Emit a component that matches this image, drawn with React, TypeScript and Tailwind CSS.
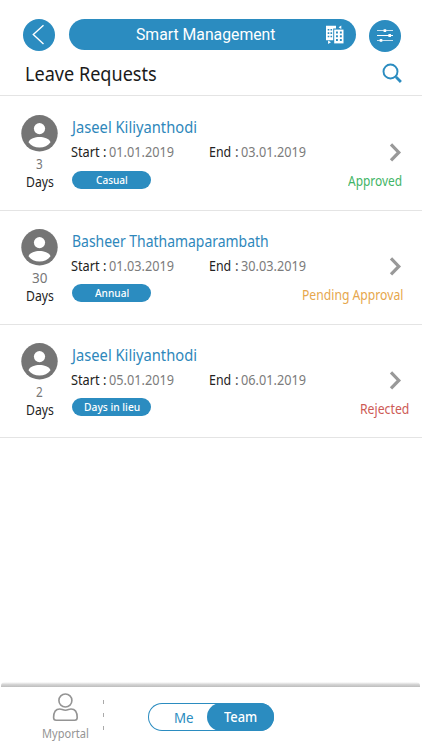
import { useLayoutEffect, useRef, useState } from 'react';
import clsx from 'clsx';

/* One line of text condensed or widened to an exact width. */
function Fit({ w, className, children }: { w: number; className?: string; children: string }) {
  const ref = useRef<HTMLSpanElement>(null);
  const [scale, setScale] = useState(1);
  useLayoutEffect(() => {
    if (ref.current) setScale(w / ref.current.offsetWidth);
  }, [w, children]);
  return (
    <span className={clsx('block shrink-0 whitespace-nowrap', className)} style={{ width: w }}>
      <span ref={ref} className="inline-block origin-left align-top" style={{ transform: `scaleX(${scale})` }}>
        {children}
      </span>
    </span>
  );
}

function Avatar() {
  return (
    <svg className="block h-[37px] w-[37px]" viewBox="0 0 37 37">
      <circle cx="18.500" cy="18.300" r="18.200" fill="#757575" />
      <circle cx="18.500" cy="13.600" r="5.600" fill="#fff" />
      <path d="M7.500 27.200C8.600 23.600 14.200 22 18.500 22s9.900 1.600 11 5.200c-2.400 3.300-6.400 5.300-11 5.300s-8.600-2-11-5.300z" fill="#fff" />
    </svg>
  );
}

function Buildings() {
  return (
    <svg className="block h-[20px] w-[20px]" viewBox="0 0 20 20">
      <path d="M1 .8h10v2.700H8.200v11.700H1z" fill="#fff" />
      <path d="M2.700 4h1.600v1.600H2.700zM5.500 4h1.600v1.600H5.500zM2.700 7.300h1.600v1.600H2.700zM5.500 7.300h1.600v1.600H5.500zM2.700 10.700h1.600v1.600H2.700zM5.500 10.700h1.600v1.600H5.500z" fill="#2b8cc0" />
      <path d="M9.200 4.600h9.300v13.800H9.200z" fill="#fff" />
      <path d="M11 6.600h1.900v1.900H11zM14.900 6.600h1.900v1.900h-1.900zM11 10.300h1.900v1.900H11zM14.900 10.300h1.900v1.900h-1.900zM11 14h1.900v1.900H11zM14.900 14h1.900v1.900h-1.900z" fill="#2b8cc0" />
      <path d="M13.600 2.200L16.300.500v3.400zM6 17.300l-2.900-1.700v3.400z" fill="#fff" />
    </svg>
  );
}

type Request = {
  name: string;
  nameW: number;
  nameClass: string;
  days: string;
  daysW: number;
  start: string;
  end: string;
  kind: string;
  kindW: number;
  status: string;
  statusW: number;
  statusClass: string;
  rowClass: string;
  badgeClass: string;
};

const requests: Request[] = [
  { name: 'Jaseel Kiliyanthodi', nameW: 125, nameClass: 'ml-[0.500px]', days: '3', daysW: 7, start: '01.01.2019', end: '03.01.2019', kind: 'Casual', kindW: 32, status: 'Approved', statusW: 54, statusClass: 'text-[#3fb567] mr-[20px]', rowClass: 'h-[115px] pt-[19px]', badgeClass: 'mt-[11px]' },
  { name: 'Basheer Thathamaparambath', nameW: 197, nameClass: 'ml-[1px]', days: '30', daysW: 15, start: '01.03.2019', end: '30.03.2019', kind: 'Annual', kindW: 34, status: 'Pending Approval', statusW: 101, statusClass: 'text-[#e6a74d] mr-[19px]', rowClass: 'h-[114px] pt-[18px]', badgeClass: 'mt-[10px]' },
  { name: 'Jaseel Kiliyanthodi', nameW: 125, nameClass: 'ml-[0.500px]', days: '2', daysW: 7, start: '05.01.2019', end: '06.01.2019', kind: 'Days in lieu', kindW: 56, status: 'Rejected', statusW: 49, statusClass: 'text-[#cd5a55] mr-[13px]', rowClass: 'h-[113px] pt-[18px]', badgeClass: 'mt-[10px]' },
];

function Row({ r }: { r: Request }) {
  return (
    <li className={clsx('flex border-b border-[#e4e4e4]', r.rowClass)}>
      <div className="ml-[21px] flex w-[37px] shrink-0 flex-col items-center">
        <Avatar />
        <Fit w={r.daysW} className="mt-[4px] text-[13.500px] leading-[16px] text-[#777]">{r.days}</Fit>
        <Fit w={28} className="mt-[2px] text-[13.500px] leading-[16px] text-[#222]">Days</Fit>
      </div>
      <div className="ml-[13px] flex w-[236px] shrink-0 flex-col pt-[2px]">
        <Fit w={r.nameW} className={clsx('text-[16px] leading-[20px] text-[#2e87bb]', r.nameClass)}>{r.name}</Fit>
        <div className="mt-[7px] flex text-[13.500px] leading-[16px]">
          <Fit w={35} className="text-[#222]">Start :</Fit>
          <Fit w={65} className="ml-[2.500px] text-[#7c7c7c]">{r.start}</Fit>
          <Fit w={22} className="ml-[35.500px] text-[#222]">End</Fit>
          <Fit w={4} className="ml-[4px] text-[#555]">:</Fit>
          <Fit w={65} className="ml-[2px] text-[#7c7c7c]">{r.end}</Fit>
        </div>
        <div className={clsx('ml-[1px] flex h-[18px] w-[79px] items-center justify-center rounded-full bg-[#2b8cc0] text-[11px] font-medium leading-[18px] text-white', r.badgeClass)}>
          <Fit w={r.kindW}>{r.kind}</Fit>
        </div>
      </div>
      <div className="flex w-0 min-w-0 grow flex-col items-end pt-[28px]">
        <svg className="mr-[20px] block h-[19px] w-[13px]" viewBox="0 0 13 19" fill="none" stroke="#999" strokeWidth="3.200">
          <path d="M2 1.400L9.800 9.400 2 17.400" />
        </svg>
        <Fit w={r.statusW} className={clsx('mt-[11px] text-[13.500px] leading-[16px]', r.statusClass)}>{r.status}</Fit>
      </div>
    </li>
  );
}

export default function App() {
  return (
    <div className="flex h-[750px] w-[422px] flex-col overflow-hidden bg-white font-['Noto_Sans',sans-serif]">
      <header className="h-[96px] shrink-0 border-b border-[#e4e4e4]">
        <div className="flex pl-[23px] pt-[19px]">
          <button className="flex h-[32px] w-[32px] items-center justify-center rounded-full bg-[#2b8cc0]">
            <svg className="block h-[32px] w-[32px]" viewBox="0 0 32 32" fill="none" stroke="#fff" strokeWidth="1.400">
              <path d="M20.500 6.200L10.300 15.500 20.500 25" />
            </svg>
          </button>
          <div className="ml-[14px] flex h-[31px] w-[287px] items-center rounded-full bg-[#2b8cc0] pl-[66.500px] font-['Roboto'] text-[16.500px] leading-[31px] text-white">
            <Fit w={139.500}>Smart Management</Fit>
            <div className="ml-[50px] mt-px"><Buildings /></div>
          </div>
          <button className="ml-[13px] mt-[1px] h-[32px] w-[32px] rounded-full bg-[#2b8cc0]">
            <svg className="block h-[32px] w-[32px]" viewBox="0 0 32 32" fill="#fff">
              <path d="M8 10.200h16v.900H8zM8 15h16v.900H8zM8 19.900h16v.900H8z" />
              <path d="M14.600 9.200h2.600v2.800h-2.600zM19.400 14.100h2.600v2.800h-2.600zM10.700 19h2.600v2.800h-2.600z" />
            </svg>
          </button>
        </div>
        <div className="flex items-start pl-[24px] pt-[9px]">
          <Fit w={132} className="ml-[1px] mt-[1px] text-[20px] leading-[24px] text-[#1a1a1a]">Leave Requests</Fit>
          <svg className="ml-[224px] block h-[24px] w-[24px]" viewBox="0 0 24 24" fill="none" stroke="#2b8cc0">
            <circle cx="9.500" cy="10.500" r="7" strokeWidth="1.900" />
            <path d="M14.400 15.400l1.700 1.700" strokeWidth="1.900" />
            <path d="M15.300 16.300l4.600 4.700" strokeWidth="2.800" />
          </svg>
        </div>
      </header>
      <ul className="grow">
        {requests.map((r, i) => <Row key={i} r={r} />)}
      </ul>
      <div className="ml-[1px] mr-[2px] h-[5px] shrink-0 rounded-t-sm bg-linear-to-b from-white via-[#d4d4d4] to-[#bdbdbd]" />
      <footer className="flex h-[63px] shrink-0 items-start">
        <div className="ml-[41px] flex w-[48px] flex-col items-center pt-[6px] text-[#949494]">
          <svg className="block h-[29px] w-[28px]" viewBox="0 0 28 29" fill="none" stroke="currentColor" strokeWidth="1.600">
            <circle cx="14.400" cy="7.500" r="6.500" />
            <path d="M2.600 24.600c0-5.800 2.600-8.600 6.200-8.600 2 0 3 1.200 5.600 1.200s3.600-1.200 5.600-1.200c3.600 0 6.200 2.800 6.200 8.600 0 1.600-.900 2.700-2.500 2.700H5.100c-1.600 0-2.500-1.100-2.500-2.700z" />
          </svg>
          <Fit w={47} className="mt-[4px] text-[12px] leading-[16px]">Myportal</Fit>
        </div>
        <div className="ml-[14px] mt-[13px] flex flex-col gap-[9px]">
          <i className="block h-[4px] w-[1px] bg-[#aaa]" />
          <i className="block h-[4px] w-[1px] bg-[#aaa]" />
          <i className="block h-[4px] w-[1px] bg-[#aaa]" />
        </div>
        <div className="ml-[44px] mt-[16px] flex h-[28px] w-[126px] justify-between rounded-full bg-white text-[14px] ring-1 ring-inset ring-[#2b8cc0]">
          <Fit w={20} className="ml-[26px] pt-[1px] leading-[28px] text-[#2b8cc0]">Me</Fit>
          <div className="flex h-[28px] w-[67px] justify-center rounded-full bg-[#2b8cc0] font-medium leading-[28px] text-white">
            <Fit w={33}>Team</Fit>
          </div>
        </div>
      </footer>
    </div>
  );
}
